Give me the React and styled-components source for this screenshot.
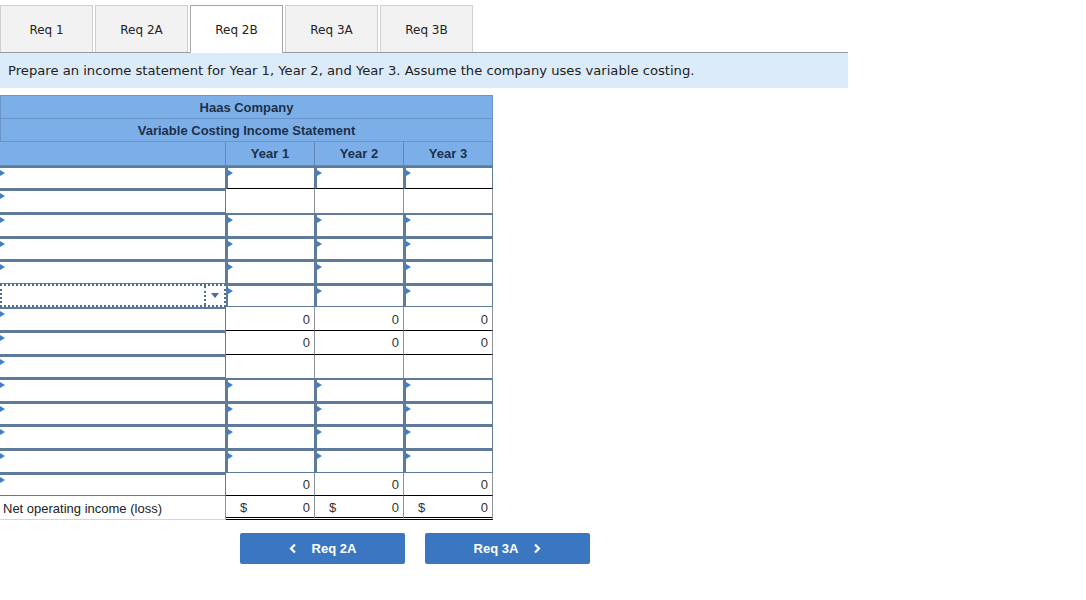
import React from 'react';
import styled, { createGlobalStyle, css } from 'styled-components';

const GlobalStyle = createGlobalStyle`
	body {
		margin: 0;
		background: #fff;
	}
`;

const Page = styled.div`
	width: 1086px;
	padding-top: 5px;
`;

const TabBar = styled.div`
	display: flex;
	gap: 2px;
	width: 848px;
	border-bottom: 1px solid #9a9a9a;
	font-family: 'DejaVu Sans', Verdana, sans-serif;
	font-size: 12px;
	color: #222;
`;

const Tab = styled.div`
	width: 93px;
	height: 47px;
	box-sizing: border-box;
	display: flex;
	align-items: center;
	justify-content: center;
	padding-top: 1px;
	background: #f2f2f2;
	border: 1px solid #cfcfcf;
	border-bottom: none;
	${({ $active }) =>
		$active &&
		css`
			background: #fff;
			border-color: #a8a8a8;
			margin-bottom: -1px;
			height: 48px;
			padding-top: 0;
		`}
`;

const Instruction = styled.div`
	width: 848px;
	height: 35px;
	box-sizing: border-box;
	padding-left: 8px;
	display: flex;
	align-items: center;
	background: #dcebf9;
	font-family: 'DejaVu Sans', Verdana, sans-serif;
	font-size: 13.15px;
	color: #222;
`;

const Sheet = styled.div`
	width: 493px;
	margin-top: 7px;
	font-family: 'Liberation Sans', Arial, sans-serif;
	font-size: 13px;
`;

const TitleRow = styled.div`
	height: 23.6px;
	box-sizing: border-box;
	display: flex;
	align-items: center;
	justify-content: center;
	padding-top: 1px;
	background: #7cafe7;
	border: 1px solid #6b95c6;
	border-top-width: ${({ $first }) => ($first ? '1px' : '0')};
	color: #1c2f4c;
	font-weight: bold;
`;

const Row = styled.div`
	display: grid;
	grid-template-columns: 226px 89px 89px 89px;
	height: 23.6px;
`;

const HeadCell = styled.div`
	box-sizing: border-box;
	display: flex;
	align-items: center;
	justify-content: center;
	padding-top: 1px;
	background: #7cafe7;
	border-right: 1px solid #5f86b4;
	border-bottom: 1px solid #5f86b4;
	color: #1c2f4c;
	font-weight: bold;
`;

const Cell = styled.div`
	position: relative;
	box-sizing: border-box;
	display: flex;
	align-items: center;
	justify-content: ${({ $align }) => $align || 'flex-start'};
	padding: 1px 4px 0 3px;
	background: #fff;
	color: #333;
	border-right: 1px solid #8d949c;

	${({ $input, $label }) =>
		$input &&
		css`
			border-style: solid;
			border-color: #5e7b9b;
			border-width: 2px 1px 1px ${$label ? '0' : '2px'};
			&::before {
				content: '';
				position: absolute;
				left: 0;
				top: 2px;
				border-left: 5px solid #3f7fca;
				border-top: 3.5px solid transparent;
				border-bottom: 3.5px solid transparent;
			}
		`}

	${({ $under }) =>
		$under === 'single' &&
		css`
			border-bottom: 1px solid #000;
		`}

	${({ $under }) =>
		$under === 'double' &&
		css`
			border-bottom: 3px double #000;
			padding-top: 3px;
		`}
`;

const LabelText = styled(Cell)`
	color: #222;
	padding-top: 3px;
	border-bottom: 1px solid #d6d6d6;
`;

const Dollar = styled(Cell)`
	justify-content: space-between;
	padding-left: 14px;
`;

const Select = styled.div`
	position: relative;
	box-sizing: border-box;
	display: flex;
	justify-content: flex-end;
	background: #fff;
	border: 2px dotted #4d6f96;
`;

const SelectArrow = styled.div`
	width: 18px;
	display: flex;
	align-items: center;
	justify-content: center;
	border-left: 2px dotted #4d6f96;
	&::after {
		content: '';
		border-top: 5px solid #4b6d93;
		border-left: 4.5px solid transparent;
		border-right: 4.5px solid transparent;
	}
`;

const Nav = styled.div`
	display: flex;
	gap: 20px;
	margin-top: 13px;
	padding-left: 240px;
`;

const NavButton = styled.button`
	width: 165px;
	height: 31px;
	display: flex;
	align-items: center;
	justify-content: center;
	gap: 15px;
	border: none;
	border-radius: 2px;
	background: #3b77c0;
	color: #fff;
	font-family: 'Liberation Sans', Arial, sans-serif;
	font-size: 13px;
	font-weight: bold;
	cursor: pointer;
`;

const Chevron = ({ dir }) => (
	<svg width='8' height='11' viewBox='0 0 8 11'>
		<polyline
			points={dir === 'left' ? '6,1.5 2,5.5 6,9.5' : '2,1.5 6,5.5 2,9.5'}
			fill='none'
			stroke='#fff'
			strokeWidth='2.2'
		/>
	</svg>
);

// kind of each body row: inputs, plain, values, select
const rows = [
	{ label: 'input', years: 'input', under: 'single' },
	{ label: 'input', years: 'plain' },
	{ label: 'input', years: 'input' },
	{ label: 'input', years: 'input' },
	{ label: 'input', years: 'input' },
	{ label: 'select', years: 'input' },
	{ label: 'input', years: 'value', under: 'single' },
	{ label: 'input', years: 'value', under: 'single' },
	{ label: 'input', years: 'plain' },
	{ label: 'input', years: 'input' },
	{ label: 'input', years: 'input' },
	{ label: 'input', years: 'input' },
	{ label: 'input', years: 'input' },
	{ label: 'input', years: 'value', under: 'single' },
	{ label: 'total', years: 'total', under: 'double' },
];

const tabs = ['Req 1', 'Req 2A', 'Req 2B', 'Req 3A', 'Req 3B'];

const YearCell = ({ kind, under }) => {
	if (kind === 'input') return <Cell $input $under={under} />;
	if (kind === 'value')
		return (
			<Cell $align='flex-end' $under={under}>
				0
			</Cell>
		);
	if (kind === 'total')
		return (
			<Dollar $under={under}>
				<span>$</span>
				<span>0</span>
			</Dollar>
		);
	return <Cell $under={under} />;
};

const LabelCell = ({ kind }) => {
	if (kind === 'select')
		return (
			<Select>
				<SelectArrow />
			</Select>
		);
	if (kind === 'total') return <LabelText>Net operating income (loss)</LabelText>;
	return <Cell $input $label />;
};

const App = () => {
	return (
		<Page>
			<GlobalStyle />
			<TabBar>
				{tabs.map((t) => (
					<Tab key={t} $active={t === 'Req 2B'}>
						{t}
					</Tab>
				))}
			</TabBar>
			<Instruction>
				Prepare an income statement for Year 1, Year 2, and Year 3. Assume the company uses variable costing.
			</Instruction>
			<Sheet>
				<TitleRow $first>Haas Company</TitleRow>
				<TitleRow>Variable Costing Income Statement</TitleRow>
				<Row>
					<HeadCell />
					<HeadCell>Year 1</HeadCell>
					<HeadCell>Year 2</HeadCell>
					<HeadCell>Year 3</HeadCell>
				</Row>
				{rows.map((r, i) => (
					<Row key={i}>
						<LabelCell kind={r.label} />
						<YearCell kind={r.years} under={r.under} />
						<YearCell kind={r.years} under={r.under} />
						<YearCell kind={r.years} under={r.under} />
					</Row>
				))}
			</Sheet>
			<Nav>
				<NavButton>
					<Chevron dir='left' />
					Req 2A
				</NavButton>
				<NavButton>
					Req 3A
					<Chevron dir='right' />
				</NavButton>
			</Nav>
		</Page>
	);
};

export default App;
